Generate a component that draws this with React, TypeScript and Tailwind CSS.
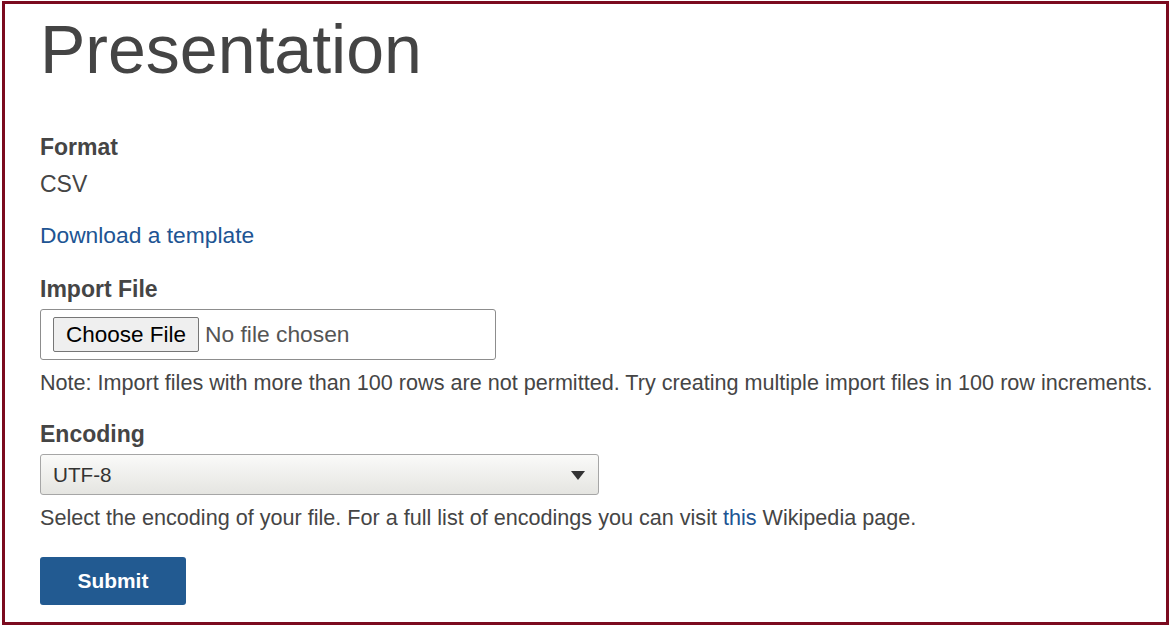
export default function App() {
  return (
    <div className="bg-white w-[1172px] h-[627px] pl-[2px] pt-[1px] font-['Liberation_Sans',Arial,sans-serif]">
      <div className="w-[1167px] h-[624px] border-[3px] border-[#7b0a1f] pl-[35px] text-[#454545]">
        <h1 className="mt-[11px] h-[68px] text-[68px] leading-[68px] text-[#444]">Presentation</h1>

        <div className="mt-[53px] h-[22px] text-[23px] leading-[22px] font-bold">Format</div>
        <div className="mt-[15px] h-[22px] text-[23px] leading-[22px]">CSV</div>

        <a href="#" className="mt-[29px] block h-[22px] w-fit text-[22.8px] leading-[22px] text-[#205493]">
          Download a template
        </a>

        <div className="mt-[32px] h-[22px] text-[23px] leading-[22px] font-bold">Import File</div>
        <label className="mt-[9px] flex h-[51px] w-[456px] items-center rounded-[3px] border border-[#8d8d8d] bg-white pl-[12px]">
          <span className="flex h-[35px] items-center rounded-[2px] border border-[#767676] bg-[#efefef] px-[12px] text-[22.5px] text-black">
            Choose File
          </span>
          <span className="ml-[6px] text-[22.8px] text-[#555]">No file chosen</span>
        </label>

        <p className="mt-[12px] h-[22px] text-[21.6px] leading-[22px]">
          Note: Import files with more than 100 rows are not permitted. Try creating multiple import files in 100 row increments.
        </p>

        <div className="mt-[29px] h-[22px] text-[23px] leading-[22px] font-bold">Encoding</div>
        <div className="mt-[9px] flex h-[41px] w-[559px] items-center justify-between rounded-[3px] border border-[#a6a6a6] bg-gradient-to-b from-[#fafaf9] to-[#e5e5e1] pl-[12px] pr-[12px]">
          <span className="text-[20.7px] text-[#333]">UTF-8</span>
          <svg width="14" height="10" viewBox="0 0 14 10" className="mr-[1px]">
            <path d="M0 1 H14 L7 10 Z" fill="#333" />
          </svg>
        </div>

        <p className="mt-[12px] h-[22px] text-[21.6px] leading-[22px]">
          Select the encoding of your file. For a full list of encodings you can visit{' '}
          <a href="#" className="text-[#205493]">this</a> Wikipedia page.
        </p>

        <button className="mt-[28px] flex h-[48px] w-[146px] items-center justify-center rounded-[3px] bg-[#225a91] text-[20.9px] font-bold text-white">
          Submit
        </button>
      </div>
    </div>
  );
}
